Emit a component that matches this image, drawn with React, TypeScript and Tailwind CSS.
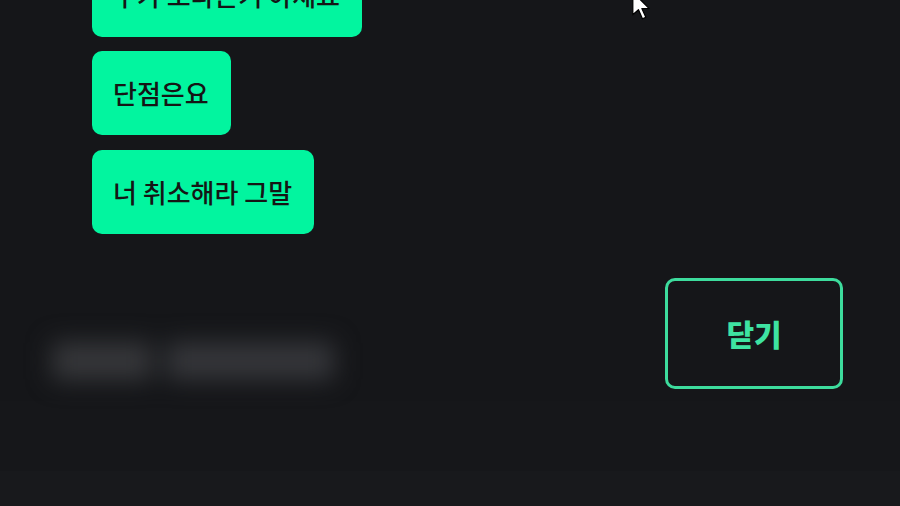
import React from "react";

const font = { fontFamily: '"Noto Sans CJK KR", "Noto Sans", sans-serif' };

function Bubble({ text, extra = "" }: { text: string; extra?: string }) {
  return (
    <div
      className={`h-[84px] flex items-center rounded-[10px] bg-[#02f59f] pl-[21px] pr-[22px] text-[26px] font-medium text-[#151515] leading-none ${extra}`}
    >
      {text}
    </div>
  );
}

export default function App() {
  return (
    <div className="relative w-[900px] h-[506px] overflow-hidden bg-[#151619]" style={font}>
      <div className="flex flex-col">
        <div className="mt-[-47px] pl-[92px] flex flex-col items-start gap-[14px]">
          <Bubble text="누가 보라는거 아세요" />
          <Bubble text="단점은요" />
          <Bubble text="너 취소해라 그말" extra="mt-[1px]" />
        </div>
        <div className="mt-[44px] flex items-start justify-between pl-[52px] pr-[57px]">
          <div className="mt-[64px] flex items-center gap-[14px] blur-[12px]">
            <div className="w-[100px] h-[38px] rounded bg-[#36373a]" />
            <div className="w-[168px] h-[38px] rounded bg-[#35363a]" />
          </div>
          <button className="w-[178px] h-[111px] rounded-[10px] border-[3px] border-[#3ddc9d] flex items-center justify-center text-[30px] font-black text-[#3ee3a2]">
            닫기
          </button>
        </div>
        <div className="mt-[12px] h-[70px] bg-[#16171a]" />
        <div className="h-[40px] bg-[#18191c]" />
      </div>
      <svg
        className="absolute left-[630px] top-[-9px]"
        width="26"
        height="34"
        viewBox="0 0 22 30"
      >
        <path
          d="M2 1 L2 21 L7 16.5 L10.5 24.5 L13.5 23.2 L10 15.5 L16.5 15.5 Z"
          fill="#ffffff"
          stroke="#000000"
          strokeWidth="1.1"
          strokeLinejoin="round"
        />
      </svg>
    </div>
  );
}
